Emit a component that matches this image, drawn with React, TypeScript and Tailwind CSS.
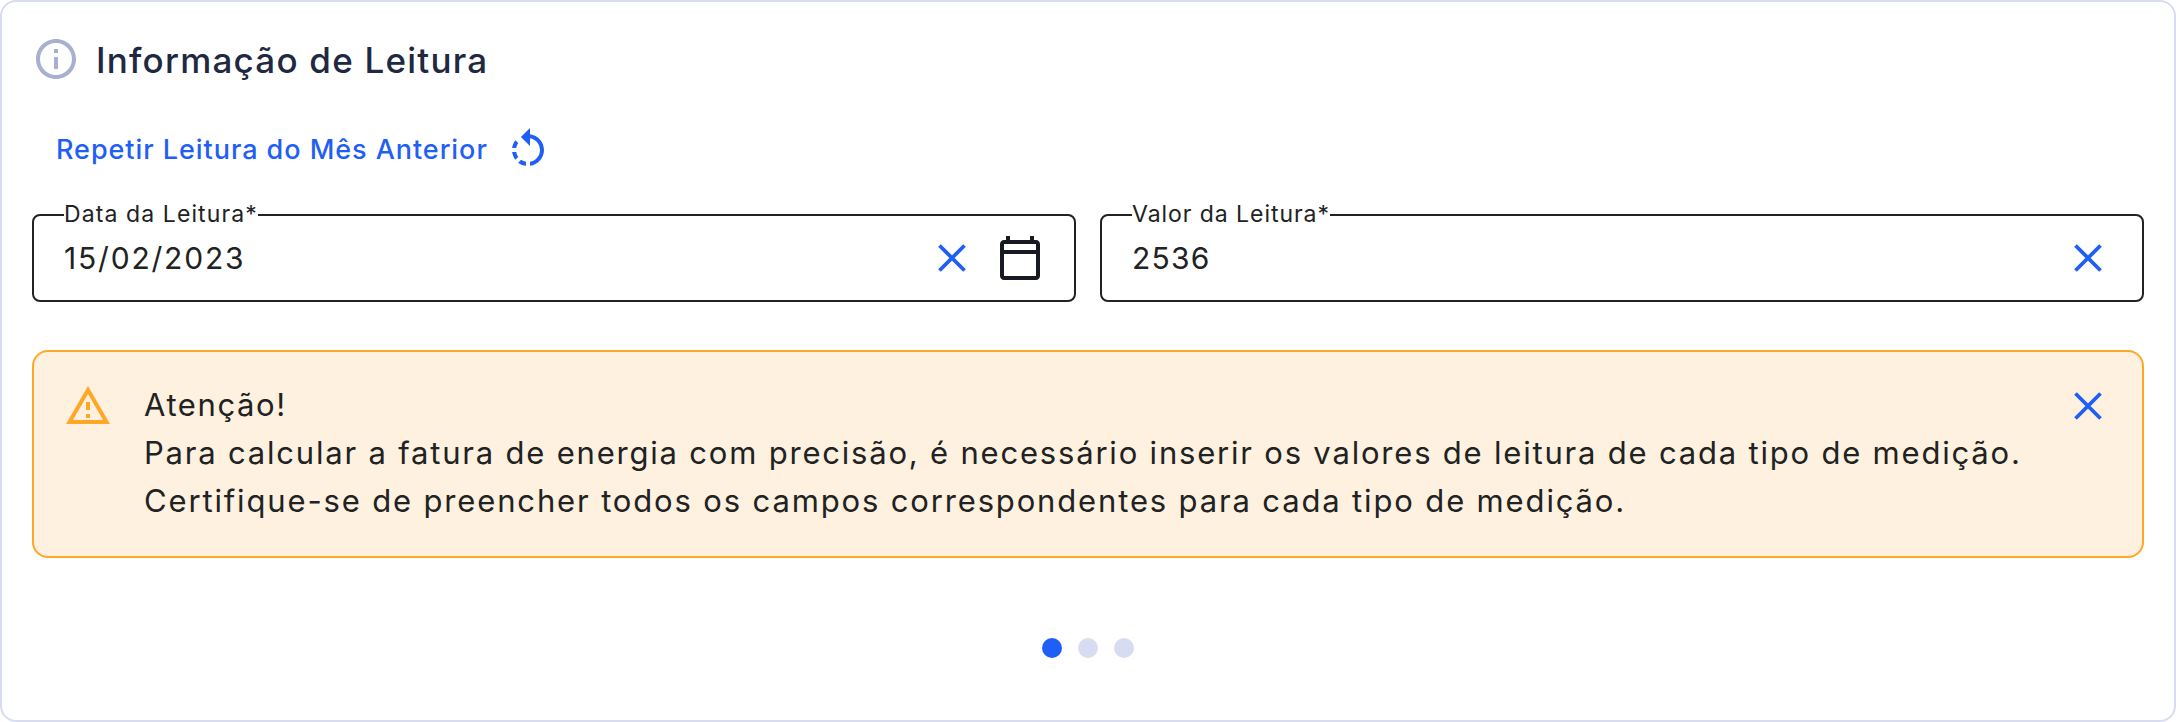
import type { ReactNode } from "react";

type IconProps = { d: string; className?: string };

function Icon({ d, className = "" }: IconProps) {
  return (
    <svg viewBox="0 0 24 24" fill="currentColor" aria-hidden="true" className={`size-12 shrink-0 ${className}`}>
      <path d={d} />
    </svg>
  );
}

const INFO =
  "M11 7h2v2h-2zm0 4h2v6h-2zm1-9C6.48 2 2 6.48 2 12s4.48 10 10 10 10-4.48 10-10S17.52 2 12 2zm0 18c-4.41 0-8-3.59-8-8s3.59-8 8-8 8 3.59 8 8-3.59 8-8 8z";
const ROTATE_LEFT =
  "M7.11 8.53L5.7 7.11C4.8 8.27 4.24 9.61 4.07 11h2.02c.14-.87.49-1.72 1.02-2.47zM6.09 13H4.07c.17 1.39.72 2.73 1.62 3.89l1.41-1.42c-.52-.75-.87-1.59-1.01-2.47zm1.01 5.32c1.16.9 2.51 1.44 3.9 1.61V17.9c-.87-.15-1.71-.49-2.46-1.03L7.1 18.32zM13 4.07V1L8.45 5.55 13 10V6.09c2.84.48 5 2.94 5 5.91s-2.16 5.43-5 5.91v2.02c3.95-.49 7-3.85 7-7.93s-3.05-7.44-7-7.93z";
const CALENDAR =
  "M20 3h-1V1h-2v2H7V1H5v2H4c-1.1 0-2 .9-2 2v16c0 1.1.9 2 2 2h16c1.1 0 2-.9 2-2V5c0-1.1-.9-2-2-2zm0 18H4V10h16v11zm0-13H4V5h16v3z";
const WARNING =
  "M12 5.99L19.53 19H4.47L12 5.99M12 2L1 21h22L12 2zm1 14h-2v2h2v-2zm0-6h-2v4h2v-4z";

function CloseButton({ label }: { label: string }) {
  return (
    <button type="button" aria-label={label} className="size-12 shrink-0 text-[#1f5ff6]">
      <svg viewBox="0 0 24 24" fill="none" stroke="currentColor" strokeWidth="1.9" className="size-12">
        <path d="M5.75 5.75 18.25 18.25M18.25 5.75 5.75 18.25" />
      </svg>
    </button>
  );
}

type FieldProps = { label: ReactNode; value: string; valueClass: string; legendClass: string; children: ReactNode };

function Field({ label, value, valueClass, legendClass, children }: FieldProps) {
  return (
    <fieldset className="h-[99px] min-w-0 flex-1 rounded-lg border-2 border-[#202223] pr-[30px] pl-[30px]">
      <legend className={`h-6 text-[23px] leading-[23px] whitespace-nowrap ${legendClass}`}>{label}</legend>
      <div className="flex h-[62px] items-center">
        <span className={`flex-1 pb-px text-[30px] leading-[34px] ${valueClass}`}>{value}</span>
        {children}
      </div>
    </fieldset>
  );
}

export default function App() {
  return (
    <main className="flex h-[722px] w-[2176px] flex-col rounded-2xl border-2 border-[#d8dcf0] bg-white px-[30px] font-['Inter','Liberation_Sans',sans-serif] text-[#202223]">
      <header className="mt-[33px] flex h-12 items-center gap-4">
        <Icon d={INFO} className="text-[#a8afd0]" />
        <h1 className="pt-0.5 text-[35px] leading-10 font-medium tracking-[1.22px] whitespace-nowrap text-[#202842]">
          Informação de Leitura
        </h1>
      </header>
      <button type="button" className="mt-[43px] ml-6 flex h-12 items-center self-start text-[#1f5ff6]">
        <span className="w-[448px] text-left text-[27px] leading-10 font-medium tracking-[0.95px] whitespace-nowrap">
          Repetir Leitura do Mês Anterior
        </span>
        <Icon d={ROTATE_LEFT} />
      </button>
      <div className="mt-[29px] flex gap-6">
        <Field label="Data da Leitura*" value="15/02/2023" valueClass="tracking-[1.8px]" legendClass="w-[194px] tracking-[1.1px]">
          <CloseButton label="Limpar data" />
          <Icon d={CALENDAR} className="ml-5 text-[#171923]" />
        </Field>
        <Field label="Valor da Leitura*" value="2536" valueClass="tracking-[1.2px]" legendClass="w-[198px] tracking-[0.95px]">
          <CloseButton label="Limpar valor" />
        </Field>
      </div>
      <section className="mt-12 flex h-[208px] rounded-2xl border-2 border-[#ffa726] bg-[#fff1df] px-[30px] pt-[30px]">
        <Icon d={WARNING} className="text-[#ffa726]" />
        <div className="-mt-px ml-8 min-w-0 flex-1 text-[31px] leading-[48px] whitespace-nowrap">
          <p className="tracking-[1.6px]">Atenção!</p>
          <p className="tracking-[1.8px]">
            Para calcular a fatura de energia com precisão, é necessário inserir os valores de leitura de cada tipo de medição.
          </p>
          <p className="tracking-[1.85px]">
            Certifique-se de preencher todos os campos correspondentes para cada tipo de medição.
          </p>
        </div>
        <CloseButton label="Fechar aviso" />
      </section>
      <nav className="mt-20 flex justify-center gap-4">
        <span className="size-5 rounded-full bg-[#1f5ff6]" />
        <span className="size-5 rounded-full bg-[#d8dcf0]" />
        <span className="size-5 rounded-full bg-[#d8dcf0]" />
      </nav>
    </main>
  );
}
